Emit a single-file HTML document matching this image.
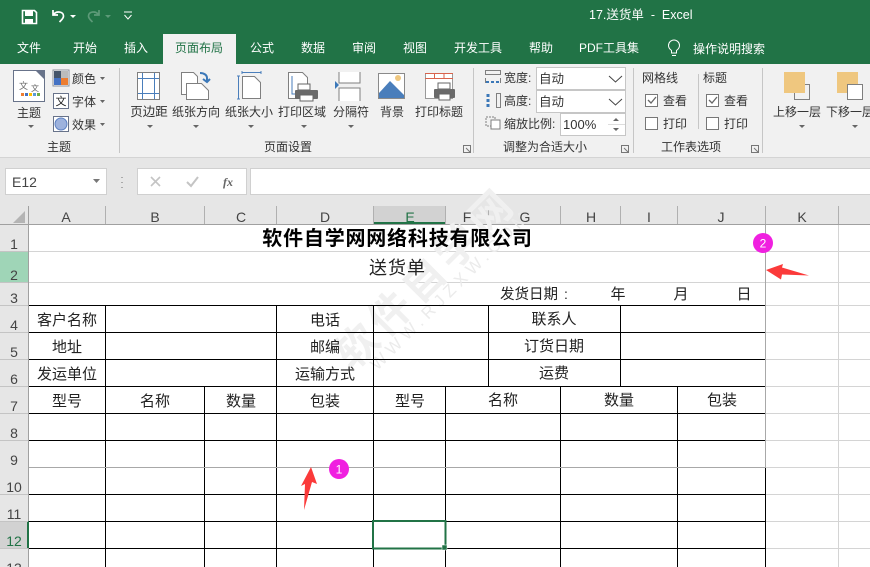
<!DOCTYPE html>
<html><head><meta charset="utf-8"><style>
html,body{margin:0;padding:0;background:#e6e6e6}
svg{display:block}
text{font-family:"Liberation Sans","Noto Sans CJK SC",sans-serif;fill:#333}
.t{font-size:12px;fill:#fff}
.r{font-size:12px;fill:#333}
.c{text-anchor:middle}
.k{font-size:15px;fill:#222;text-anchor:middle}
</style></head><body>
<svg width="870" height="567" viewBox="0 0 870 567" xmlns="http://www.w3.org/2000/svg">
<rect width="870" height="567" fill="#e6e6e6"/>
<rect width="870" height="64" fill="#217346"/>
<!-- QAT -->
<path d="M22.500 10.500h12l2 2v11h-14z" fill="none" stroke="#fff" stroke-width="1.600"/>
<rect x="25" y="11" width="8" height="5" fill="#fff"/><rect x="25" y="19" width="8" height="5" fill="#fff"/>
<path d="M53 10v5h5M53.500 14.500c3-4 10-3 10 1.500 0 2.500-2 4-4 6" fill="none" stroke="#fff" stroke-width="1.700"/>
<path d="M70 15h6l-3 3z" fill="#fff"/>
<path d="M99 10v5h-5M98.500 14.500c-3-4-10-3-10 1.500 0 2.500 2 4 4 6" fill="none" stroke="#5d9a78" stroke-width="1.700"/>
<path d="M105 15h6l-3 3z" fill="#5d9a78"/>
<path d="M124 12h8M124.500 15l3.500 4 3.500-4" fill="none" stroke="#fff"/>
<text class="t" x="589" y="19" xml:space="preserve" style="font-size:12.500px;white-space:pre">17.送货单  -  Excel</text>
<!-- Tabs -->
<rect x="163" y="34" width="73" height="31" fill="#f1f1f1"/>
<text class="t c" x="29" y="52">文件</text><text class="t c" x="85" y="52">开始</text><text class="t c" x="136" y="52">插入</text>
<text class="c" x="199" y="52" style="font-size:12px;fill:#217346">页面布局</text>
<text class="t c" x="262" y="52">公式</text><text class="t c" x="313" y="52">数据</text><text class="t c" x="364" y="52">审阅</text><text class="t c" x="415" y="52">视图</text><text class="t c" x="478" y="52">开发工具</text><text class="t c" x="541" y="52">帮助</text><text class="t c" x="609" y="52">PDF工具集</text>
<path d="M671.500 53v-2.500c-2-1.500-3-3-3-5a5.500 5.500 0 0 1 11 0c0 2-1 3.500-3 5V53zM672 55.500h4" fill="none" stroke="#fff"/>
<text class="t" x="693" y="53">操作说明搜索</text>
<!-- Ribbon -->
<rect y="64" width="870" height="93" fill="#f1f1f1"/>
<rect y="157" width="870" height="1" fill="#d4d4d4"/>
<g stroke="#c6c6c6"><path d="M119.500 68v85M473.500 68v85M633.500 68v85M762.500 68v85M698.500 74v55"/></g>
<!-- theme -->
<rect x="13.500" y="70.500" width="31" height="31" fill="#fff" stroke="#68738a"/>
<path d="M36 71h8v8z" fill="#68738a"/>
<text x="19" y="89" style="font-size:9px;fill:#666">文</text><text x="31" y="91" style="font-size:8px;fill:#666">文</text>
<rect x="21" y="93" width="3" height="3" fill="#ed7d31"/><rect x="25" y="93" width="3" height="3" fill="#4472c4"/><rect x="29" y="93" width="3" height="3" fill="#ffc000"/><rect x="33" y="93" width="3" height="3" fill="#5b9bd5"/><rect x="37" y="93" width="3" height="3" fill="#70ad47"/>
<text class="r c" x="29" y="117">主题</text><path d="M28 125h6l-3 3z" fill="#666"/>
<rect x="53" y="70" width="16" height="16" fill="#fff" stroke="#8a8f99"/>
<rect x="54" y="71" width="7" height="7" fill="#44546a"/><rect x="61" y="71" width="7" height="7" fill="#bbb"/><rect x="54" y="78" width="7" height="7" fill="#4472c4"/><rect x="61" y="78" width="7" height="7" fill="#ed7d31"/>
<rect x="53.500" y="93.500" width="15" height="15" fill="#fff" stroke="#68738a"/><text class="c" x="61" y="105" style="font-size:11px;fill:#222">文</text>
<rect x="53.500" y="116.500" width="15" height="15" fill="#fff" stroke="#68738a"/><circle cx="61" cy="124" r="6" fill="#9db2dd" stroke="#5b7fc1"/>
<text class="r" x="72" y="83">颜色</text><path d="M100 77h5l-2.500 3z" fill="#666"/>
<text class="r" x="72" y="106">字体</text><path d="M100 100h5l-2.500 3z" fill="#666"/>
<text class="r" x="72" y="129">效果</text><path d="M100 123h5l-2.500 3z" fill="#666"/>
<text class="r c" x="59" y="151">主题</text>
<!-- page setup icons -->
<rect x="137.500" y="72.500" width="22" height="27" fill="#fff" stroke="#7f7f7f"/><path d="M142.500 73v26M154.500 73v26M138 78.500h21M138 93.500h21" stroke="#4a7ebb" fill="none"/>
<path d="M181.500 72.500h12l4 4v18h-16z" fill="#fff" stroke="#7f7f7f"/><path d="M186.500 83.500h15l7 7v9h-22z" fill="#fff" stroke="#7f7f7f"/>
<path d="M200 73c4 0 7 2 7 5v3M203 79l4 3 3-3" fill="none" stroke="#3b78b8" stroke-width="2"/>
<path d="M242 72.500h19M242 71v3M261 71v3M238.500 76v23M237 76h3M237 99h3" stroke="#4a7ebb" fill="none"/>
<path d="M242.500 76.500h12l6 6v16h-18z" fill="#fff" stroke="#7f7f7f"/>
<path d="M288.500 72.500h14l5 5v21h-19z" fill="#fff" stroke="#7f7f7f"/><path d="M292 76v18h3" fill="none" stroke="#4a7ebb"/>
<rect x="298" y="84" width="12" height="6" fill="#fff" stroke="#666"/><rect x="295" y="90" width="23" height="9" rx="1" fill="#6a6a6a"/><rect x="300" y="95" width="13" height="6" fill="#fff" stroke="#666"/>
<path d="M339 72v11h21V72M339 101V88h21v13" fill="#fff" stroke="#7f7f7f"/><path d="M335 81l4 4-4 4z" fill="#3b78b8"/>
<rect x="378.500" y="73.500" width="26" height="25" fill="#fff" stroke="#8a8a8a"/><path d="M379 93l11-12 14 14v3h-25z" fill="#4a7ebb"/><circle cx="398" cy="78" r="3" fill="#efc77f"/>
<path d="M425.500 73.500h27v25h-27z" fill="#fff" stroke="#9a9a9a"/><path d="M425 73.500h28M425 78.500h28M434.500 73v6M444 73v6" stroke="#d9634c" fill="none"/>
<rect x="438" y="83" width="12" height="6" fill="#fff" stroke="#666"/><rect x="434" y="89" width="21" height="9" rx="1" fill="#6a6a6a"/><rect x="439" y="94" width="11" height="6" fill="#fff" stroke="#666"/>
<g style="font-size:12px;fill:#333;text-anchor:middle">
<text x="149" y="116" style="font-size:12.500px">页边距</text><text x="196" y="116">纸张方向</text><text x="249" y="116">纸张大小</text><text x="302" y="116">打印区域</text><text x="351" y="116">分隔符</text><text x="392" y="116">背景</text><text x="439" y="116">打印标题</text>
<text x="288" y="151">页面设置</text><text x="545" y="151">调整为合适大小</text><text x="691" y="151">工作表选项</text>
</g>
<g fill="#666"><path d="M147 125h6l-3 3zM193 125h6l-3 3zM248 125h6l-3 3zM301 125h6l-3 3zM348 125h6l-3 3zM799 125h6l-3 3zM852 125h6l-3 3z"/></g>
<path d="M463.500 145.500h7v7h-7zM466 148l4 4" fill="none" stroke="#777"/>
<path d="M621.500 145.500h7v7h-7zM624 148l4 4" fill="none" stroke="#777"/>
<path d="M751.500 145.500h7v7h-7zM754 148l4 4" fill="none" stroke="#777"/>
<!-- scale -->
<path d="M485.500 70.500h15v4h-15zM485.500 78v5M500.500 78v5" fill="none" stroke="#7f7f7f"/><path d="M486 82h14" stroke="#3b78b8" stroke-width="2" stroke-dasharray="3 2"/>
<rect x="496.500" y="93.500" width="4" height="14" fill="none" stroke="#7f7f7f"/><path d="M488 94v14" stroke="#3b78b8" stroke-width="3" stroke-dasharray="3 2"/>
<rect x="486" y="117" width="9" height="9" fill="none" stroke="#7f7f7f" stroke-dasharray="2 1"/><rect x="491" y="120" width="9" height="9" fill="#fff" stroke="#7f7f7f"/>
<text class="r" x="504" y="82">宽度:</text><text class="r" x="504" y="105">高度:</text><text class="r" x="504" y="128">缩放比例:</text>
<rect x="536.500" y="67.500" width="89" height="22" fill="#fff" stroke="#c6c6c6"/><rect x="536.500" y="90.500" width="89" height="22" fill="#fff" stroke="#c6c6c6"/>
<text x="539" y="83" style="font-size:12.500px;fill:#333">自动</text><text x="539" y="106" style="font-size:12.500px;fill:#333">自动</text>
<path d="M609 76l6.500 6 6.500-6M609 99l6.500 6 6.500-6" fill="none" stroke="#444"/>
<rect x="560.500" y="113.500" width="65" height="22" fill="#fff" stroke="#c6c6c6"/>
<text x="563" y="129" style="font-size:13px;fill:#333">100%</text>
<path d="M608 124.500h17" stroke="#ddd"/><path d="M613 121l3-3 3 3zM613 128l3 3 3-3z" fill="#666"/>
<!-- sheet options -->
<text class="r" x="642" y="82">网格线</text><text class="r" x="703" y="82">标题</text>
<g fill="#fff" stroke="#777"><rect x="645.500" y="94.500" width="12" height="12"/><rect x="645.500" y="117.500" width="12" height="12"/><rect x="706.500" y="94.500" width="12" height="12"/><rect x="706.500" y="117.500" width="12" height="12"/></g>
<path d="M648 100l3 3 5-6M709 100l3 3 5-6" fill="none" stroke="#666" stroke-width="1.300"/>
<text class="r" x="663" y="105">查看</text><text class="r" x="663" y="128">打印</text><text class="r" x="724" y="105">查看</text><text class="r" x="724" y="128">打印</text>
<!-- arrange -->
<rect x="784" y="72" width="21" height="21" fill="#efc77f"/><path d="M805 84.500h4.500v15h-15V93" fill="none" stroke="#7f7f7f"/>
<rect x="837" y="72" width="21" height="21" fill="#efc77f"/><rect x="847.500" y="84.500" width="15" height="15" fill="#fff" stroke="#7f7f7f"/>
<text class="r c" x="797" y="116">上移一层</text><text class="r" x="826" y="116">下移一层</text>
<!-- name/formula bar -->
<rect x="5.500" y="168.500" width="101" height="26" fill="#fff" stroke="#d0d0d0"/>
<text x="12" y="187" style="font-size:14px;fill:#444">E12</text><path d="M93 179h7l-3.500 4z" fill="#777"/>
<path d="M122 177v1M122 182v1M122 187v1" stroke="#aaa" stroke-width="2"/>
<rect x="137.500" y="168.500" width="109" height="26" fill="#fff" stroke="#d0d0d0"/>
<path d="M151 177l9 9M160 177l-9 9" stroke="#c4c4c4" stroke-width="1.600"/>
<path d="M187 182l4 4 7-9" fill="none" stroke="#c4c4c4" stroke-width="2"/>
<text x="223" y="186" style="font-size:12px;font-family:'Liberation Serif';font-style:italic;font-weight:bold;fill:#666">fx</text>
<rect x="250.500" y="168.500" width="630" height="26" fill="#fff" stroke="#d0d0d0"/>
<!-- headers -->
<rect y="206" width="870" height="18" fill="#e6e6e6"/>
<rect x="373" y="206" width="73" height="18" fill="#d2d2d2"/>
<rect x="373" y="222" width="73" height="2" fill="#217346"/>
<path d="M25 211v12H13z" fill="#b4b4b4"/>
<rect x="0" y="224" width="870" height="343" fill="#fff"/>
<rect x="0" y="224" width="28" height="343" fill="#e6e6e6"/>
<rect x="0" y="251" width="28" height="31" fill="#9fd5b7"/>
<rect x="0" y="521" width="28" height="27" fill="#d2d2d2"/>
<path d="M0 224.500h870" stroke="#a0a0a0"/>
<path d="M28.500 206v361" stroke="#a0a0a0"/>
<rect x="27" y="521" width="2" height="27" fill="#217346"/>
<g stroke="#b0b0b0"><path d="M105.500 206v18M204.500 206v18M276.500 206v18M373.500 206v18M445.500 206v18M488.500 206v18M560.500 206v18M620.500 206v18M677.500 206v18M765.500 206v18M838.500 206v18"/></g>
<g stroke="#d4d4d4">
<path d="M29 251.500h841M29 282.500h841M29 305.500h841M766 332.500h104M766 359.500h104M766 386.500h104M766 413.500h104M766 440.500h104M766 467.500h104M766 494.500h104M766 521.500h104M766 548.500h104M838.500 225v342"/>
<path d="M0 251.500h28M0 282.500h28M0 305.500h28M0 332.500h28M0 359.500h28M0 386.500h28M0 413.500h28M0 440.500h28M0 494.500h28M0 521.500h28M0 548.500h28" stroke="#c4c4c4"/>
</g>
<!-- watermark -->
<g transform="translate(435.600 288.600) rotate(-45)">
<text class="c" x="0" y="0" style="font-size:42px;fill:#f0f0f0;font-weight:bold;letter-spacing:5px">软件自学网</text>
<text class="c" x="10" y="17" style="font-size:17px;fill:#ebebeb;letter-spacing:5px">WWW.RJZXW.COM</text>
</g>
<!-- table lines -->
<g stroke="#000" shape-rendering="crispEdges">
<path d="M29 305.500h737M29 332.500h737M29 359.500h737M29 386.500h737M29 413.500h737M29 440.500h737M29 494.500h737M29 521.500h737M29 548.500h737"/>
<path d="M105.500 306v261M276.500 306v261M373.500 306v261M488.500 306v81M620.500 306v81M204.500 387v180M445.500 387v180M560.500 387v180M677.500 387v180M765.500 467v100"/>
</g>
<path d="M765.500 225v242" stroke="#a8a8a8"/>
<path d="M29 467.500h737" stroke="#a8a8a8"/>
<!-- selection -->
<rect x="373" y="521" width="72.500" height="27.500" fill="none" stroke="#217346" stroke-width="2" shape-rendering="crispEdges"/>
<rect x="442" y="545" width="5" height="5" fill="#217346" stroke="#fff" stroke-width=".5"/>
<!-- col headers -->
<g style="font-size:14px;text-anchor:middle">
<text x="66" y="222" style="fill:#444">A</text><text x="155" y="222" style="fill:#444">B</text><text x="241" y="222" style="fill:#444">C</text><text x="325" y="222" style="fill:#444">D</text><text x="410" y="222" style="fill:#217346">E</text><text x="467" y="222" style="fill:#444">F</text><text x="525" y="222" style="fill:#444">G</text><text x="591" y="222" style="fill:#444">H</text><text x="649" y="222" style="fill:#444">I</text><text x="721" y="222" style="fill:#444">J</text><text x="802" y="222" style="fill:#444">K</text>
</g>
<g style="text-anchor:middle">
<text x="14" y="249" style="font-size:14px;fill:#444">1</text><text x="14" y="280" style="font-size:14px;fill:#444">2</text><text x="14" y="303" style="font-size:14px;fill:#444">3</text><text x="14" y="330" style="font-size:14px;fill:#444">4</text><text x="14" y="357" style="font-size:14px;fill:#444">5</text><text x="14" y="384" style="font-size:14px;fill:#444">6</text><text x="14" y="411" style="font-size:14px;fill:#444">7</text><text x="14" y="438" style="font-size:14px;fill:#444">8</text><text x="14" y="465" style="font-size:14px;fill:#444">9</text><text x="14" y="492" style="font-size:14px;fill:#444">10</text><text x="14" y="519" style="font-size:14px;fill:#444">11</text><text x="14" y="546" style="font-size:14px;fill:#217346">12</text><text x="14" y="573" style="font-size:14px;fill:#444">13</text>
</g>
<!-- cell text -->
<text class="k" x="397.500" y="245" style="font-size:20px;font-weight:bold;fill:#000;letter-spacing:.8px">软件自学网网络科技有限公司</text>
<text class="k" x="397.500" y="274" style="font-size:18px;letter-spacing:1px">送货单</text>
<text class="k" x="529" y="299" style="font-size:14.500px">发货日期</text><text class="k" x="566" y="299" style="font-size:14px">:</text><text class="k" x="618" y="299">年</text><text class="k" x="681" y="299">月</text><text class="k" x="744" y="299">日</text>
<text class="k" x="67" y="325">客户名称</text><text class="k" x="325" y="325">电话</text><text class="k" x="554" y="324">联系人</text>
<text class="k" x="67" y="352">地址</text><text class="k" x="325" y="352">邮编</text><text class="k" x="554" y="351">订货日期</text>
<text class="k" x="67" y="379">发运单位</text><text class="k" x="325" y="379">运输方式</text><text class="k" x="554" y="378">运费</text>
<text class="k" x="67" y="406">型号</text><text class="k" x="155" y="406">名称</text><text class="k" x="241" y="406">数量</text><text class="k" x="325" y="406">包装</text><text class="k" x="410" y="406">型号</text><text class="k" x="503" y="405">名称</text><text class="k" x="619" y="405">数量</text><text class="k" x="722" y="405">包装</text>
<!-- annotations -->
<path d="M311 467l6 17-5-2-8 28 1-26-4 2z" fill="#fb3a3a"/>
<circle cx="339" cy="469" r="10" fill="#f020e0"/><text class="c" x="339" y="473.500" style="font-size:12px;fill:#fff">1</text>
<path d="M766 270l17-6-1 3.500 27 8-27-1-1 5z" fill="#fb3a3a"/>
<circle cx="763" cy="243" r="10" fill="#f020e0"/><text class="c" x="763" y="247.500" style="font-size:12px;fill:#fff">2</text>
</svg>
</body></html>
